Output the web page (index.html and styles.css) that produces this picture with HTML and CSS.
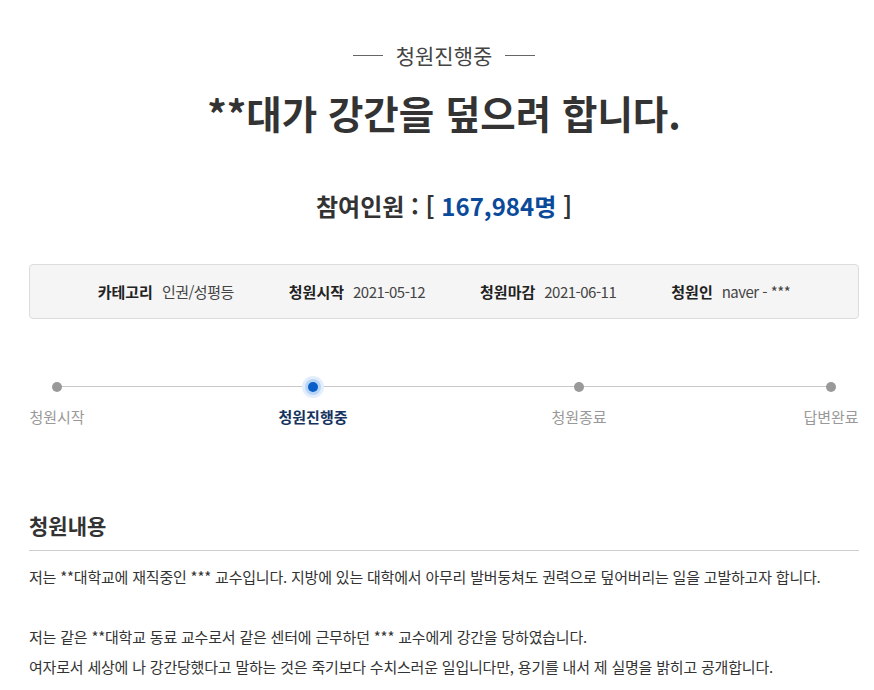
FILE: index.html
```html
<!DOCTYPE html>
<html lang="ko">
<head>
<meta charset="utf-8">
<title>청원</title>
<link rel="stylesheet" href="styles.css">
</head>
<body>
<div class="page">
  <div class="status"><span class="status-line"></span><span class="status-text">청원진행중</span><span class="status-line"></span></div>
  <h1 class="title">**대가 강간을 덮으려 합니다.</h1>
  <h2 class="count">참여인원 : [ <span class="count-num">167,984명</span> ]</h2>
  <ul class="info">
    <li><strong>카테고리</strong><span>인권/성평등</span></li>
    <li><strong>청원시작</strong><span>2021-05-12</span></li>
    <li><strong>청원마감</strong><span>2021-06-11</span></li>
    <li><strong>청원인</strong><span>naver - ***</span></li>
  </ul>
  <div class="steps">
    <div class="step s1"><i class="dot"></i><span>청원시작</span></div>
    <div class="step s2 active"><i class="dot"></i><span>청원진행중</span></div>
    <div class="step s3"><i class="dot"></i><span>청원종료</span></div>
    <div class="step s4"><i class="dot"></i><span>답변완료</span></div>
  </div>
  <h3 class="section-title">청원내용</h3>
  <div class="content">
    <p>저는 **대학교에 재직중인 *** 교수입니다. 지방에 있는 대학에서 아무리 발버둥쳐도 권력으로 덮어버리는 일을 고발하고자 합니다.</p>
    <p>저는 같은 **대학교 동료 교수로서 같은 센터에 근무하던 *** 교수에게 강간을 당하였습니다.<br>여자로서 세상에 나 강간당했다고 말하는 것은 죽기보다 수치스러운 일입니다만, 용기를 내서 제 실명을 밝히고 공개합니다.</p>
  </div>
</div>
</body>
</html>
```
FILE: styles.css
```css
* { box-sizing: border-box; }
html, body { margin: 0; padding: 0; background: #fff; }
body {
  font-family: "Noto Sans CJK KR", "Noto Sans", sans-serif;
  color: #333;
  overflow: hidden;
}
.page {
  width: 830px;
  margin-left: 29px;
  padding-top: 41px;
}
.status {
  display: flex;
  justify-content: center;
  align-items: center;
  gap: 13px;
  height: 28px;
}
.status-line {
  width: 30px;
  height: 1px;
  background: #666;
}
.status-text {
  font-size: 21px;
  line-height: 28px;
  color: #444;
}
.title {
  margin: 19px 0 0;
  text-align: center;
  font-size: 38.5px;
  line-height: 48px;
  font-weight: 700;
  color: #333;
}
.count {
  margin: 53px 0 0;
  text-align: center;
  font-size: 24px;
  line-height: 34px;
  font-weight: 700;
  color: #333;
}
.count-num { color: #0b4a9a; }
.info {
  list-style: none;
  margin: 41px 0 0;
  padding: 0;
  height: 55px;
  border: 1px solid #dcdcdc;
  border-radius: 4px;
  background: #f5f5f5;
  display: flex;
  justify-content: center;
  align-items: center;
  gap: 55px;
  font-size: 15px;
}
.info li { display: flex; gap: 9px; align-items: center; }
.info strong { color: #222; font-weight: 700; }
.info span { color: #444; letter-spacing: -0.5px; }
.steps {
  position: relative;
  margin-top: 63px;
  display: grid;
  grid-template-columns: 56px 456px 76px 1fr 56px;
}
.steps::before {
  content: "";
  position: absolute;
  left: 28px;
  right: 28px;
  top: 4px;
  height: 1px;
  background: #c8c8c8;
}
.step {
  position: relative;
  display: flex;
  flex-direction: column;
  align-items: center;
  white-space: nowrap;
}
.s1 { grid-column: 1; }
.s2 { grid-column: 2; }
.s3 { grid-column: 3; }
.s4 { grid-column: 5; }
.dot {
  display: block;
  width: 10px;
  height: 10px;
  border-radius: 50%;
  background: #999;
}
.step span {
  margin-top: 15px;
  font-size: 15px;
  line-height: 20px;
  color: #999;
}
.step.active .dot {
  background: #0a5ec8;
  box-shadow: 0 0 0 3px #b9d5f6, 0 0 0 6px #e3eefc;
}
.step.active span { color: #16335f; font-weight: 700; }
.section-title {
  margin: 83px 0 0;
  padding-bottom: 10px;
  border-bottom: 1px solid #cfcfcf;
  font-size: 21px;
  line-height: 30px;
  font-weight: 700;
  color: #333;
}
.content {
  margin-top: 11px;
  font-size: 15px;
  line-height: 30px;
  letter-spacing: -0.2px;
  color: #333;
}
.content p { margin: 0 0 30px; }
```
